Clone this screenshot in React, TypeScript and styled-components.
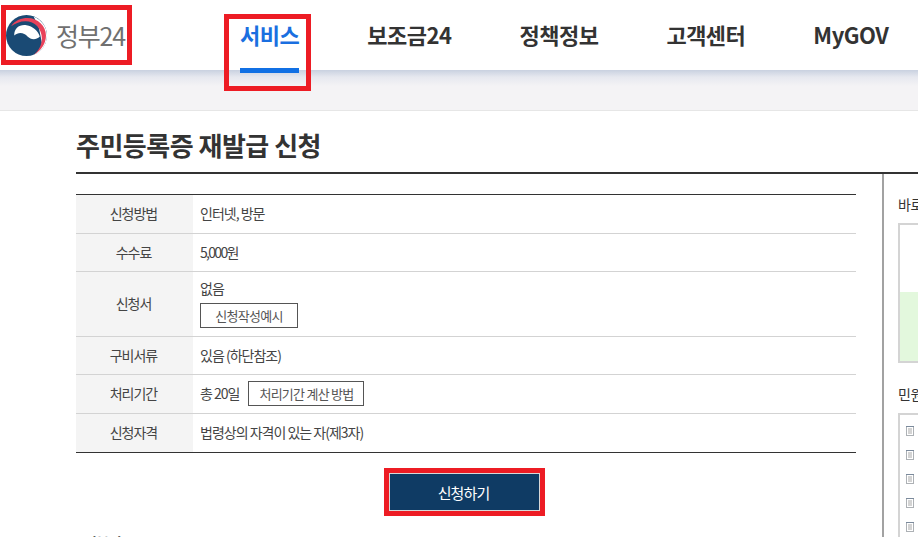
import React from 'react';
import styled, { createGlobalStyle } from 'styled-components';

const GlobalStyle = createGlobalStyle`
  html, body {
    margin: 0;
    padding: 0;
    height: 537px;
    overflow: hidden;
    background: #fff;
    font-family: "Noto Sans CJK KR", "Noto Sans", sans-serif;
    color: #333;
  }
  * { box-sizing: border-box; }
`;

const Page = styled.div`
  width: 918px;
  height: 537px;
  overflow: hidden;
`;

const Header = styled.header`
  height: 70px;
  display: flex;
  align-items: flex-start;
  background: #fff;
`;

const LogoBox = styled.a`
  width: 131px;
  height: 60px;
  margin: 5px 0 0 1px;
  border: 5px solid #ed1c24;
  display: flex;
  align-items: center;
  gap: 9px;
  flex-shrink: 0;
`;

const LogoText = styled.span`
  font-size: 25px;
  line-height: 1;
  letter-spacing: -1.2px;
  color: #707070;
  white-space: nowrap;
`;

const Nav = styled.nav`
  display: flex;
  gap: 68px;
  margin-left: 108px;
`;

const NavItem = styled.a<{ $active?: boolean }>`
  position: relative;
  height: 70px;
  padding-top: 19px;
  font-size: 22px;
  line-height: 30px;
  font-weight: 700;
  letter-spacing: -0.5px;
  white-space: nowrap;
  color: ${p => (p.$active ? '#1a6fe0' : '#333')};

  ${p =>
    p.$active &&
    `
    &::after {
      content: '';
      position: absolute;
      left: 0;
      right: 0;
      bottom: -3px;
      height: 5px;
      background: #1170e4;
    }
    &::before {
      content: '';
      position: absolute;
      left: -16px;
      right: -12px;
      top: 14px;
      height: 67px;
      border: 5px solid #ed1c24;
      z-index: 2;
    }
  `}
`;

const Band = styled.div`
  height: 41px;
  background: linear-gradient(#c9d1e0 0, #e6e8ef 7px, #f4f3f5 16px);
  border-bottom: 1px solid #e6e6e6;
`;

const Content = styled.main`
  padding-left: 76px;
`;

const Title = styled.h1`
  margin: 0;
  height: 63px;
  padding-top: 15px;
  font-size: 26px;
  line-height: 38px;
  font-weight: 700;
  letter-spacing: -0.5px;
  color: #333;
  border-bottom: 2px solid #333;
`;

const Columns = styled.div`
  display: flex;
`;

const MainColumn = styled.section`
  width: 780px;
  padding-top: 20px;
  flex-shrink: 0;
`;

const InfoTable = styled.div`
  border-top: 1px solid #333;
  border-bottom: 1px solid #333;
`;

const Row = styled.div<{ $height: number }>`
  display: flex;
  height: ${p => p.$height}px;
  border-top: 1px solid #d3d3d3;

  &:first-child {
    border-top: 0;
  }
`;

const Label = styled.div`
  width: 117px;
  flex-shrink: 0;
  padding: 0 2px 2px 0;
  background: #f4f4f4;
  display: flex;
  align-items: center;
  justify-content: center;
  font-size: 14px;
  letter-spacing: -1px;
  color: #444;
`;

const Value = styled.div`
  flex: 1;
  padding: 0 0 2px 7px;
  display: flex;
  align-items: center;
  gap: 9px;
  font-size: 14px;
  letter-spacing: -1px;
  color: #444;
`;

const StackedValue = styled(Value)`
  flex-direction: column;
  align-items: flex-start;
  justify-content: flex-start;
  gap: 5px;
  padding: 6px 0 0 7px;
  line-height: 20px;
`;

const Amount = styled.span`
  letter-spacing: -1.7px;
`;

const OutlineButton = styled.button<{ $width: number }>`
  width: ${p => p.$width}px;
  height: 25px;
  padding: 0;
  border: 1px solid #555;
  background: #fff;
  font: inherit;
  font-size: 13px;
  letter-spacing: -0.75px;
  color: #555;
`;

const Actions = styled.div`
  display: flex;
  justify-content: center;
  padding: 15px 3px 0 0;
`;

const ApplyFrame = styled.div`
  border: 5px solid #ed1c24;
`;

const ApplyButton = styled.button`
  display: block;
  width: 151px;
  height: 38px;
  padding: 0 2px 0 0;
  border: 1px solid #d8d8d8;
  background: #0f3b64;
  color: #fff;
  font: inherit;
  font-size: 15px;
  letter-spacing: -0.9px;
`;

const SectionHeading = styled.h2`
  margin: 16px 0 0 8px;
  font-size: 14px;
  line-height: 20px;
  font-weight: 700;
  letter-spacing: -0.5px;
  color: #333;
`;

const Sidebar = styled.aside`
  flex: 1;
  min-width: 0;
  margin-left: 26px;
  height: 365px;
  border-left: 2px solid #a2a2a2;
  padding: 19px 0 0 14px;
  overflow: hidden;
`;

const SideTitle = styled.h3`
  margin: 0;
  height: 30px;
  width: 200px;
  font-size: 14px;
  line-height: 22px;
  font-weight: 400;
  letter-spacing: -0.4px;
  color: #333;
`;

const QuickBox = styled.div`
  width: 200px;
  height: 140px;
  border: 2px solid #d4d4d4;
  display: flex;
  flex-direction: column;
  margin-bottom: 20px;
`;

const QuickBlank = styled.div`
  height: 67px;
  background: #fff;
`;

const QuickGreen = styled.div`
  flex: 1;
  background: #e3f8dd;
`;

const ListBox = styled.ul`
  list-style: none;
  width: 200px;
  height: 140px;
  margin: 0;
  padding: 11px 0 0 6px;
  border: solid #d4d4d4;
  border-width: 2px 0 0 2px;
  display: flex;
  flex-direction: column;
  gap: 14px;
`;

const ListIcon = styled.svg`
  display: block;
  width: 8px;
  height: 10px;
`;

function DocIcon() {
  return (
    <ListIcon viewBox="0 0 8 10">
      <rect x="0.5" y="0.5" width="7" height="9" fill="#fff" stroke="#adb1b5" />
      <path d="M0 0.5h8" stroke="#7b8a9c" strokeWidth="1" />
      <path d="M2 3h4M2 5h4M2 7h4" stroke="#a8a8a8" strokeWidth="1" />
    </ListIcon>
  );
}

function GovLogo() {
  return (
    <svg width="41" height="41" viewBox="0 0 40 40">
      <circle cx="20" cy="20" r="20" fill="#1a4a74" />
      <path d="M27 1.5C35 5 40 12 40 20c0 9-6 17-14 19.5 5-3 8.5-7 9-12.5L32 12z" fill="#fff" />
      <path d="M8 20C8 13 13 9 20 10c6 1 11 5 13 11-4 4-9 3-12 0-3-4-9-5-13-1z" fill="#fff" />
      <path
        d="M5 11C9 5 15 3 21 3c10 0 18 8 18 17 0 8-5 15-12 19 5-4 8-10 8-16C35 13 28 6 19 6 14 6 9 8 5 11z"
        fill="#e8425a"
      />
    </svg>
  );
}

export default function App() {
  return (
    <Page>
      <GlobalStyle />
      <Header>
        <LogoBox>
          <GovLogo />
          <LogoText>정부24</LogoText>
        </LogoBox>
        <Nav>
          <NavItem $active>서비스</NavItem>
          <NavItem>보조금24</NavItem>
          <NavItem>정책정보</NavItem>
          <NavItem>고객센터</NavItem>
          <NavItem>MyGOV</NavItem>
        </Nav>
      </Header>
      <Band />
      <Content>
        <Title>주민등록증 재발급 신청</Title>
        <Columns>
          <MainColumn>
            <InfoTable>
              <Row $height={38}>
                <Label>신청방법</Label>
                <Value>인터넷, 방문</Value>
              </Row>
              <Row $height={38}>
                <Label>수수료</Label>
                <Value><Amount>5,000원</Amount></Value>
              </Row>
              <Row $height={65}>
                <Label>신청서</Label>
                <StackedValue>
                  없음
                  <OutlineButton $width={98}>신청작성예시</OutlineButton>
                </StackedValue>
              </Row>
              <Row $height={38}>
                <Label>구비서류</Label>
                <Value>있음 (하단참조)</Value>
              </Row>
              <Row $height={39}>
                <Label>처리기간</Label>
                <Value>
                  총 20일
                  <OutlineButton $width={116}>처리기간 계산 방법</OutlineButton>
                </Value>
              </Row>
              <Row $height={39}>
                <Label>신청자격</Label>
                <Value>법령상의 자격이 있는 자(제3자)</Value>
              </Row>
            </InfoTable>
            <Actions>
              <ApplyFrame>
                <ApplyButton>신청하기</ApplyButton>
              </ApplyFrame>
            </Actions>
            <SectionHeading>기본정보</SectionHeading>
          </MainColumn>
          <Sidebar>
            <SideTitle>바로가기</SideTitle>
            <QuickBox>
              <QuickBlank />
              <QuickGreen />
            </QuickBox>
            <SideTitle>민원안내</SideTitle>
            <ListBox>
              <li><DocIcon /></li>
              <li><DocIcon /></li>
              <li><DocIcon /></li>
              <li><DocIcon /></li>
              <li><DocIcon /></li>
            </ListBox>
          </Sidebar>
        </Columns>
      </Content>
    </Page>
  );
}
